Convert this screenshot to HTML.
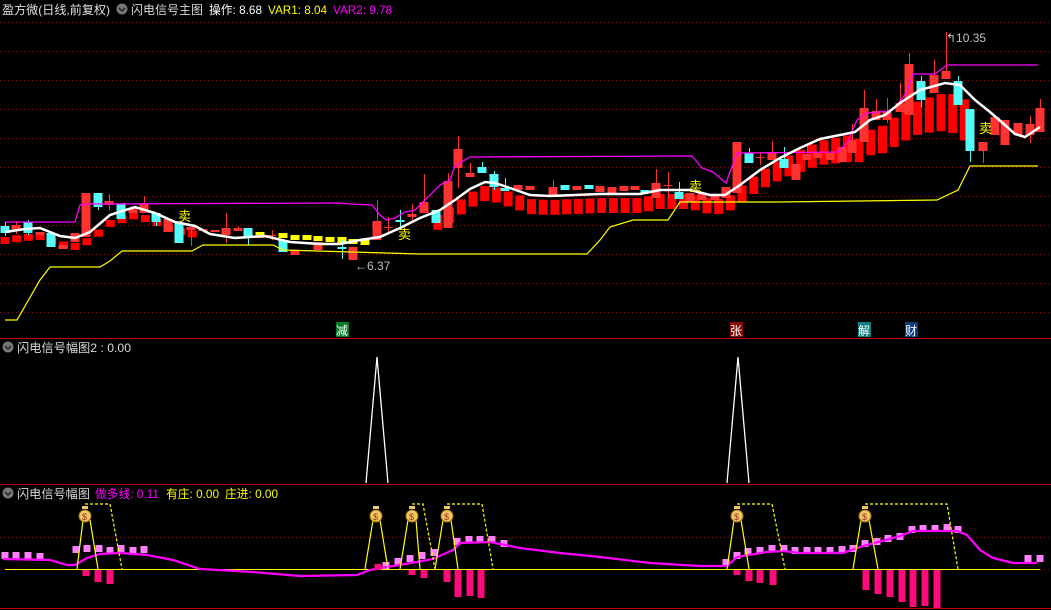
<!DOCTYPE html>
<html><head><meta charset="utf-8">
<style>
html,body{margin:0;padding:0;background:#000;width:1051px;height:610px;overflow:hidden}
svg{display:block}
text{font-family:"Liberation Sans","Noto Sans CJK SC",sans-serif}
</style></head><body>
<svg id="s" width="1051" height="610" xmlns="http://www.w3.org/2000/svg">
<rect width="1051" height="610" fill="#000"/>
<g id="grid" stroke="#8a1010" stroke-width="1" stroke-dasharray="1,3"></g>
<line x1="0" y1="338.5" x2="1051" y2="338.5" stroke="#c00000"/>
<line x1="0" y1="484.5" x2="1051" y2="484.5" stroke="#c00000"/>
<line x1="0" y1="608.5" x2="1051" y2="608.5" stroke="#c00000"/>
<g id="c"></g>
<g font-size="12" lengthAdjust="spacingAndGlyphs">
<text x="2" y="14" fill="#e0e0e0" textLength="108" lengthAdjust="spacingAndGlyphs">盈方微(日线,前复权)</text>
<text x="131" y="14" fill="#d8d8d8" textLength="72" lengthAdjust="spacingAndGlyphs">闪电信号主图</text>
<text x="209" y="14" fill="#fff" textLength="53" lengthAdjust="spacingAndGlyphs">操作: 8.68</text>
<text x="268" y="14" fill="#ffff00" textLength="59" lengthAdjust="spacingAndGlyphs">VAR1: 8.04</text>
<text x="333" y="14" fill="#ff00ff" textLength="59" lengthAdjust="spacingAndGlyphs">VAR2: 9.78</text>
<text x="17" y="352" fill="#d8d8d8" textLength="114" lengthAdjust="spacingAndGlyphs">闪电信号幅图2 : 0.00</text>
<text x="17" y="498" fill="#d8d8d8" textLength="73" lengthAdjust="spacingAndGlyphs">闪电信号幅图</text>
<text x="95" y="498" fill="#ff00ff" textLength="64" lengthAdjust="spacingAndGlyphs">做多线: 0.11</text>
<text x="166" y="498" fill="#ffff00" textLength="53" lengthAdjust="spacingAndGlyphs">有庄: 0.00</text>
<text x="225" y="498" fill="#ffff00" textLength="53" lengthAdjust="spacingAndGlyphs">庄进: 0.00</text>
</g>
<circle cx="122" cy="9" r="5.5" fill="#777"/><path d="M119 8 l3 3 l3 -3" stroke="#222" stroke-width="1.5" fill="none"/>
<circle cx="8" cy="347" r="5.5" fill="#777"/><path d="M5 346 l3 3 l3 -3" stroke="#222" stroke-width="1.5" fill="none"/>
<circle cx="8" cy="493" r="5.5" fill="#777"/><path d="M5 492 l3 3 l3 -3" stroke="#222" stroke-width="1.5" fill="none"/>
<text x="355" y="270" font-size="12" fill="#c0c0c0">←6.37</text>
<text x="946" y="42" font-size="12" fill="#c0c0c0">↰10.35</text>
<rect x="336" y="322" width="13" height="15" fill="#0a7a2a"/><text x="336" y="335" font-size="12" fill="#fff">减</text>
<rect x="730" y="322" width="13" height="15" fill="#8a0a0a"/><text x="730" y="335" font-size="12" fill="#fff">张</text>
<rect x="858" y="322" width="13" height="15" fill="#0a8080"/><text x="858" y="335" font-size="12" fill="#fff">解</text>
<rect x="905" y="322" width="13" height="15" fill="#0a3a7a"/><text x="905" y="335" font-size="12" fill="#fff">财</text>
<g font-size="13" fill="#ffff00">
<text x="178" y="221">卖</text><text x="398" y="239">卖</text><text x="689" y="191">卖</text><text x="979" y="133">卖</text>
</g>
</svg>
<script>
var S='',ns=document.getElementById('c');
function P(pts,col,w,dash){var d=pts.map(function(p){return p[0]+','+p[1]}).join(' ');S+='<polyline points="'+d+'" fill="none" stroke="'+col+'" stroke-width="'+w+'"'+(dash?' stroke-dasharray="'+dash+'"':'')+'/>';}
function R(x,y,w,h,c){S+='<rect x="'+x+'" y="'+y+'" width="'+w+'" height="'+h+'" fill="'+c+'"/>';}
function L(x1,y1,x2,y2,c){S+='<line x1="'+x1+'" y1="'+y1+'" x2="'+x2+'" y2="'+y2+'" stroke="'+c+'"/>';}
var g='';[22,51,80,109,138,167,196,225,254,283,312,537,569].forEach(function(y){g+='<line x1="0" y1="'+(y+.5)+'" x2="1051" y2="'+(y+.5)+'"/>';});
document.getElementById('grid').innerHTML=g;
var ma=[[5,232],[25,229],[40,228],[60,236],[75,238],[90,232],[110,215],[135,207],[155,213],[175,222],[195,226],[210,234],[235,238],[265,236],[290,242],[320,244],[340,244],[360,240],[380,237],[400,228],[420,218],[440,210],[455,200],[470,189],[485,182],[495,183],[510,188],[530,195],[550,196],[600,194],[640,194],[660,190],[690,190],[710,195],[725,195],[740,185],[760,170],[780,158],[800,148],[820,139],[840,135],[855,132],[870,120],[885,115],[900,103],[920,90],[945,83],[960,85],[975,100],[990,112],[1005,125],[1015,134],[1025,137],[1040,127]];
function maY(x){for(var i=1;i<ma.length;i++){if(x<=ma[i][0]){var a=ma[i-1],b=ma[i];return a[1]+(b[1]-a[1])*(x-a[0])/(b[0]-a[0]);}}return 127;}
for(var x=5;x<1040;x+=11.7){var m=maY(x),t,h;
 if(x<200){t=m+5;h=7;}else if(x<430){continue;}else if(x<740){t=m+4;h=15;}else if(x<850){t=m+2;h=16+(x-740)/10;}else if(x<965){t=m+10;h=22+(x-850)/6;}else{continue;}
 R((x-4.5).toFixed(1),t.toFixed(1),9,h.toFixed(1),'#ff0000');}
[[260,232,3],[283,233,5],[295,235,5],[307,235,5],[318,236,5],[330,237,5],[342,237,6],[353,239,5],[365,239,6],[377,237,3]].forEach(function(b){R(b[0]-4.5,b[1],9,b[2],'#ffff00');});
var r='#ff3232',c='#54fcfc';
var cd=[[5,226,233,222,236,c],[16,225,230,221,234,r],[28,222,233,220,235,c],[40,232,235,0,0,r],[51,233,247,0,0,c],[63,245,249,0,0,r],[75,233,242,0,0,r],[86,193,237,0,0,r],[98,193,207,0,210,c],[109,201,205,194,210,r],[121,204,219,0,0,c],[133,208,213,0,0,r],[144,203,213,196,0,r],[156,213,222,0,226,c],[168,219,232,0,0,r],[179,223,243,0,0,c],[191,227,230,0,246,r],[203,229,231,0,0,r],[215,230,232,0,0,r],[226,228,235,213,243,r],[238,228,231,226,0,r],[248,228,238,0,245,c],[260,235,238,0,0,r],[272,235,236,230,240,r],[283,240,252,0,0,c],[295,250,255,0,0,r],[318,242,250,0,0,r],[342,247,249,240,259,c],[353,247,260,0,0,r],[377,221,240,200,0,r],[388,227,228,217,233,r],[400,220,222,210,230,c],[412,214,217,204,220,r],[424,202,213,174,0,r],[436,210,223,0,0,c],[448,181,228,173,0,r],[458,149,168,136,188,r],[470,173,177,163,0,r],[482,167,173,162,0,c],[494,174,187,171,190,c],[505,188,191,178,0,c],[518,185,190,0,0,r],[530,186,190,0,0,r],[553,187,196,180,0,r],[565,185,190,0,0,c],[577,186,190,0,0,r],[589,185,189,0,0,c],[600,186,192,0,0,r],[612,187,193,0,0,r],[624,186,191,0,0,r],[635,186,190,0,0,r],[645,190,193,0,0,c],[656,183,198,169,0,r],[668,185,186,172,198,r],[679,192,199,182,0,c],[690,193,202,0,0,r],[702,193,200,0,0,r],[715,195,200,0,0,r],[726,187,198,0,0,r],[737,142,193,0,0,r],[749,153,163,148,0,c],[760,157,158,152,165,r],[772,153,160,141,0,r],[784,159,168,147,0,c],[796,164,180,0,0,r],[807,154,160,146,0,r],[818,153,158,0,0,r],[830,153,160,0,0,r],[842,147,162,0,0,r],[852,140,153,124,0,r],[864,108,142,90,0,r],[876,111,120,99,0,r],[887,112,120,98,123,r],[900,103,112,83,0,r],[909,64,115,53,0,r],[921,81,100,76,107,c],[934,75,93,60,0,r],[946,71,79,32,0,r],[958,81,105,76,0,c],[970,109,151,0,162,c],[983,142,151,0,163,r],[995,117,135,0,0,r],[1005,120,145,0,0,r],[1018,123,135,0,0,r],[1030,124,135,116,143,r],[1040,108,132,99,0,r]];
cd.forEach(function(k){var x=k[0];if(k[3]||k[4])L(x+.5,k[3]||k[1],x+.5,k[4]||k[2],k[5]);var h=Math.max(1,k[2]-k[1]);R(x-4.5,k[1],9,h,k[5]);});
P([[5,222],[75,222],[80,205],[86,204],[340,203],[350,204],[372,205],[380,215],[386,220],[395,218],[405,212],[415,210],[440,185],[450,180],[455,166],[470,157],[692,156],[702,168],[713,172],[726,183],[737,153],[838,152],[847,143],[857,120],[867,113],[890,111],[897,105],[907,92],[913,74],[935,74],[947,65],[1038,65]],'#ff00ff',1.3);
P([[5,320],[17,320],[40,280],[50,267],[100,267],[110,261],[122,251],[192,251],[203,245],[273,245],[283,250],[420,254],[587,254],[600,240],[610,227],[633,220],[668,220],[680,202],[777,202],[858,201],[937,200],[958,190],[970,166],[1038,166]],'#ffff00',1.2);
P(ma,'#ffffff',2.5);
P([[366,483],[377,357],[388,483]],'#ffffff',1.3);P([[727,483],[738,357],[749,483]],'#ffffff',1.3);
L(5,569.5,1040,569.5,'#ffff00');
[[5,552],[16,552],[28,552],[40,553],[76,546],[87,545],[99,545],[110,547],[121,545],[133,547],[144,546],[386,562],[398,558],[410,555],[422,552],[434,549],[457,538],[469,536],[480,536],[492,536],[504,540],[726,559],[737,552],[748,548],[760,547],[772,545],[784,545],[795,547],[807,547],[818,547],[830,547],[842,546],[853,545],[865,540],[877,538],[888,535],[900,533],[912,526],[923,525],[935,525],[947,524],[958,526],[1028,555],[1040,555]].forEach(function(b){R(b[0]-3.5,b[1],7,7,'#ff80ff');});
P([[3,559],[50,560],[67,565],[75,565],[87,558],[100,554],[120,553],[147,555],[173,560],[200,569],[253,572],[300,576],[357,575],[370,570],[387,567],[417,562],[433,559],[453,550],[460,543],[490,542],[520,548],[560,553],[600,557],[650,563],[700,566],[727,566],[737,557],[767,552],[783,551],[800,553],[843,553],[860,547],[900,536],[913,531],[957,531],[967,535],[980,550],[993,558],[1013,563],[1037,563]],'#ff00ff',2.2);
[[86,570,6],[98,570,12],[110,570,14],[378,564,6],[412,570,5],[424,570,8],[447,570,12],[458,570,27],[470,570,26],[481,570,28],[737,570,5],[749,570,11],[760,570,13],[773,570,15],[866,570,20],[878,570,24],[890,570,27],[902,570,32],[913,570,37],[925,570,36],[937,570,38]].forEach(function(b){R(b[0]-3.5,b[1],7,b[2],'#ff0a7a');});
[[77,83,90,98],[365,373,380,388],[400,408,416,420],[435,443,451,458],[727,734,741,749],[853,861,869,878]].forEach(function(t){P([[t[0],569],[t[1],520],[t[2],520],[t[3],569]],'#ffff00',1.2);});
[[85,110,122],[412,423,435],[447,482,493],[737,772,785],[865,947,958]].forEach(function(t){P([[t[0],504],[t[1],504],[t[2],569]],'#ffff00',1.2,'3,2');});
[85,376,412,447,737,865].forEach(function(x){S+='<circle cx="'+x+'" cy="516" r="6" fill="#f0c860" stroke="#a07010"/><rect x="'+(x-3)+'" y="506" width="6" height="3" fill="#f0c860"/><text x="'+(x-3)+'" y="520" font-size="9" fill="#a03020">$</text>';});
ns.innerHTML=S;
</script>
</body></html>
